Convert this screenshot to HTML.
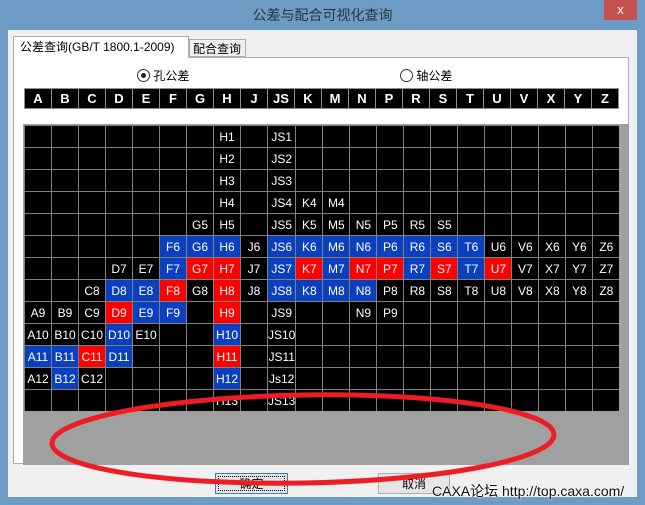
<!DOCTYPE html><html><head><meta charset="utf-8"><style>
*{margin:0;padding:0;box-sizing:border-box}
body{width:645px;height:505px;background:#6c9cc4;position:relative;overflow:hidden;font-family:"Liberation Sans","Noto Sans CJK SC",sans-serif}
.a{position:absolute}
#title{left:0;top:0;width:645px;height:30px;text-align:center;line-height:30px;font-size:14px;color:#2a3440}
#close{left:604px;top:0;width:33px;height:20px;background:#c75050;color:#fff;text-align:center;font-size:13px;line-height:20px}
#client{left:8px;top:30px;width:629px;height:467px;background:#f0f0f0}
#panel{left:13px;top:57px;width:616px;height:407px;background:#fff;border:1px solid #adadad}
.tab{font-size:12px;line-height:20px;color:#000;border:1px solid #adadad;background:#fff}
table{border-collapse:collapse;table-layout:fixed}
td{border:1px solid #808080;width:27px;font-size:12px;color:#fff;text-align:center;padding:0;overflow:hidden;white-space:nowrap}
#hdr td{height:20px;font-size:13px;font-weight:bold;background:#000;border-color:#909090}
#grid td{height:22px;background:#000}
td.b{background:#0a40c0!important}td.r{background:#ff0000!important}
.btn{border:1px solid #adadad;background:#e5e5e5;font-size:12px;text-align:center;line-height:20px}
</style></head><body>
<div class="a" id="title">公差与配合可视化查询</div>
<div class="a" id="close">x</div>
<div class="a" id="client"></div>
<div class="a" id="panel"></div>
<div class="a tab" style="left:13px;top:36px;width:176px;height:22px;border-bottom:none;padding-left:6px;">公差查询(GB/T 1800.1-2009)</div>
<div class="a tab" style="left:189px;top:39px;width:57px;height:18px;background:#f0f0f0;line-height:18px;padding-left:3px">配合查询</div>
<div class="a" style="left:137px;top:69px;font-size:12px;line-height:14px"><span style="display:inline-block;width:13px;height:13px;border:1px solid #333;border-radius:50%;vertical-align:-2px;position:relative;background:#fff"><span style="position:absolute;left:3px;top:3px;width:5px;height:5px;border-radius:50%;background:#222"></span></span> 孔公差</div>
<div class="a" style="left:400px;top:69px;font-size:12px;line-height:14px"><span style="display:inline-block;width:13px;height:13px;border:1px solid #333;border-radius:50%;vertical-align:-2px;background:#fff"></span> 轴公差</div>
<table class="a" id="hdr" style="left:24px;top:88px"><tr><td>A</td><td>B</td><td>C</td><td>D</td><td>E</td><td>F</td><td>G</td><td>H</td><td>J</td><td>JS</td><td>K</td><td>M</td><td>N</td><td>P</td><td>R</td><td>S</td><td>T</td><td>U</td><td>V</td><td>X</td><td>Y</td><td>Z</td></tr></table>
<div class="a" style="left:23px;top:124px;width:606px;height:341px;background:#a0a0a0;overflow:hidden">
<table id="grid" style="margin-left:1px;margin-top:1px">
<tr><td></td><td></td><td></td><td></td><td></td><td></td><td></td><td>H1</td><td></td><td>JS1</td><td></td><td></td><td></td><td></td><td></td><td></td><td></td><td></td><td></td><td></td><td></td><td></td></tr>
<tr><td></td><td></td><td></td><td></td><td></td><td></td><td></td><td>H2</td><td></td><td>JS2</td><td></td><td></td><td></td><td></td><td></td><td></td><td></td><td></td><td></td><td></td><td></td><td></td></tr>
<tr><td></td><td></td><td></td><td></td><td></td><td></td><td></td><td>H3</td><td></td><td>JS3</td><td></td><td></td><td></td><td></td><td></td><td></td><td></td><td></td><td></td><td></td><td></td><td></td></tr>
<tr><td></td><td></td><td></td><td></td><td></td><td></td><td></td><td>H4</td><td></td><td>JS4</td><td>K4</td><td>M4</td><td></td><td></td><td></td><td></td><td></td><td></td><td></td><td></td><td></td><td></td></tr>
<tr><td></td><td></td><td></td><td></td><td></td><td></td><td>G5</td><td>H5</td><td></td><td>JS5</td><td>K5</td><td>M5</td><td>N5</td><td>P5</td><td>R5</td><td>S5</td><td></td><td></td><td></td><td></td><td></td><td></td></tr>
<tr><td></td><td></td><td></td><td></td><td></td><td class="b">F6</td><td class="b">G6</td><td class="b">H6</td><td>J6</td><td class="b">JS6</td><td class="b">K6</td><td class="b">M6</td><td class="b">N6</td><td class="b">P6</td><td class="b">R6</td><td class="b">S6</td><td class="b">T6</td><td>U6</td><td>V6</td><td>X6</td><td>Y6</td><td>Z6</td></tr>
<tr><td></td><td></td><td></td><td>D7</td><td>E7</td><td class="b">F7</td><td class="r">G7</td><td class="r">H7</td><td>J7</td><td class="b">JS7</td><td class="r">K7</td><td class="b">M7</td><td class="r">N7</td><td class="r">P7</td><td class="b">R7</td><td class="r">S7</td><td class="b">T7</td><td class="r">U7</td><td>V7</td><td>X7</td><td>Y7</td><td>Z7</td></tr>
<tr><td></td><td></td><td>C8</td><td class="b">D8</td><td class="b">E8</td><td class="r">F8</td><td>G8</td><td class="r">H8</td><td>J8</td><td class="b">JS8</td><td class="b">K8</td><td class="b">M8</td><td class="b">N8</td><td>P8</td><td>R8</td><td>S8</td><td>T8</td><td>U8</td><td>V8</td><td>X8</td><td>Y8</td><td>Z8</td></tr>
<tr><td>A9</td><td>B9</td><td>C9</td><td class="r">D9</td><td class="b">E9</td><td class="b">F9</td><td></td><td class="r">H9</td><td></td><td>JS9</td><td></td><td></td><td>N9</td><td>P9</td><td></td><td></td><td></td><td></td><td></td><td></td><td></td><td></td></tr>
<tr><td>A10</td><td>B10</td><td>C10</td><td class="b">D10</td><td>E10</td><td></td><td></td><td class="b">H10</td><td></td><td>JS10</td><td></td><td></td><td></td><td></td><td></td><td></td><td></td><td></td><td></td><td></td><td></td><td></td></tr>
<tr><td class="b">A11</td><td class="b">B11</td><td class="r">C11</td><td class="b">D11</td><td></td><td></td><td></td><td class="r">H11</td><td></td><td>JS11</td><td></td><td></td><td></td><td></td><td></td><td></td><td></td><td></td><td></td><td></td><td></td><td></td></tr>
<tr><td>A12</td><td class="b">B12</td><td>C12</td><td></td><td></td><td></td><td></td><td class="b">H12</td><td></td><td>Js12</td><td></td><td></td><td></td><td></td><td></td><td></td><td></td><td></td><td></td><td></td><td></td><td></td></tr>
<tr><td></td><td></td><td></td><td></td><td></td><td></td><td></td><td>H13</td><td></td><td>JS13</td><td></td><td></td><td></td><td></td><td></td><td></td><td></td><td></td><td></td><td></td><td></td><td></td></tr>
</table>
<div class="a" style="left:0;top:287px;width:606px;height:60px;background:#a0a0a0"></div>
<div class="a" style="left:596px;top:0;width:10px;height:341px;background:#a0a0a0"></div>
</div>
<div class="a btn" style="left:215px;top:473px;width:73px;height:21px;border-color:#3c7fb1;outline:1px dotted #000;outline-offset:-4px">确定</div>
<div class="a btn" style="left:378px;top:473px;width:72px;height:21px">取消</div>
<svg class="a" style="left:0;top:0" width="645" height="505"><ellipse cx="303" cy="439" rx="251" ry="44" fill="none" stroke="#ee1c24" stroke-width="5" transform="rotate(-1 303 439)"/></svg>
<div class="a" style="left:432px;top:481px;font-size:14px;color:#111;text-shadow:0 0 2px #fff,0 0 2px #fff">CAXA论坛 http://top.caxa.com/</div>
</body></html>
